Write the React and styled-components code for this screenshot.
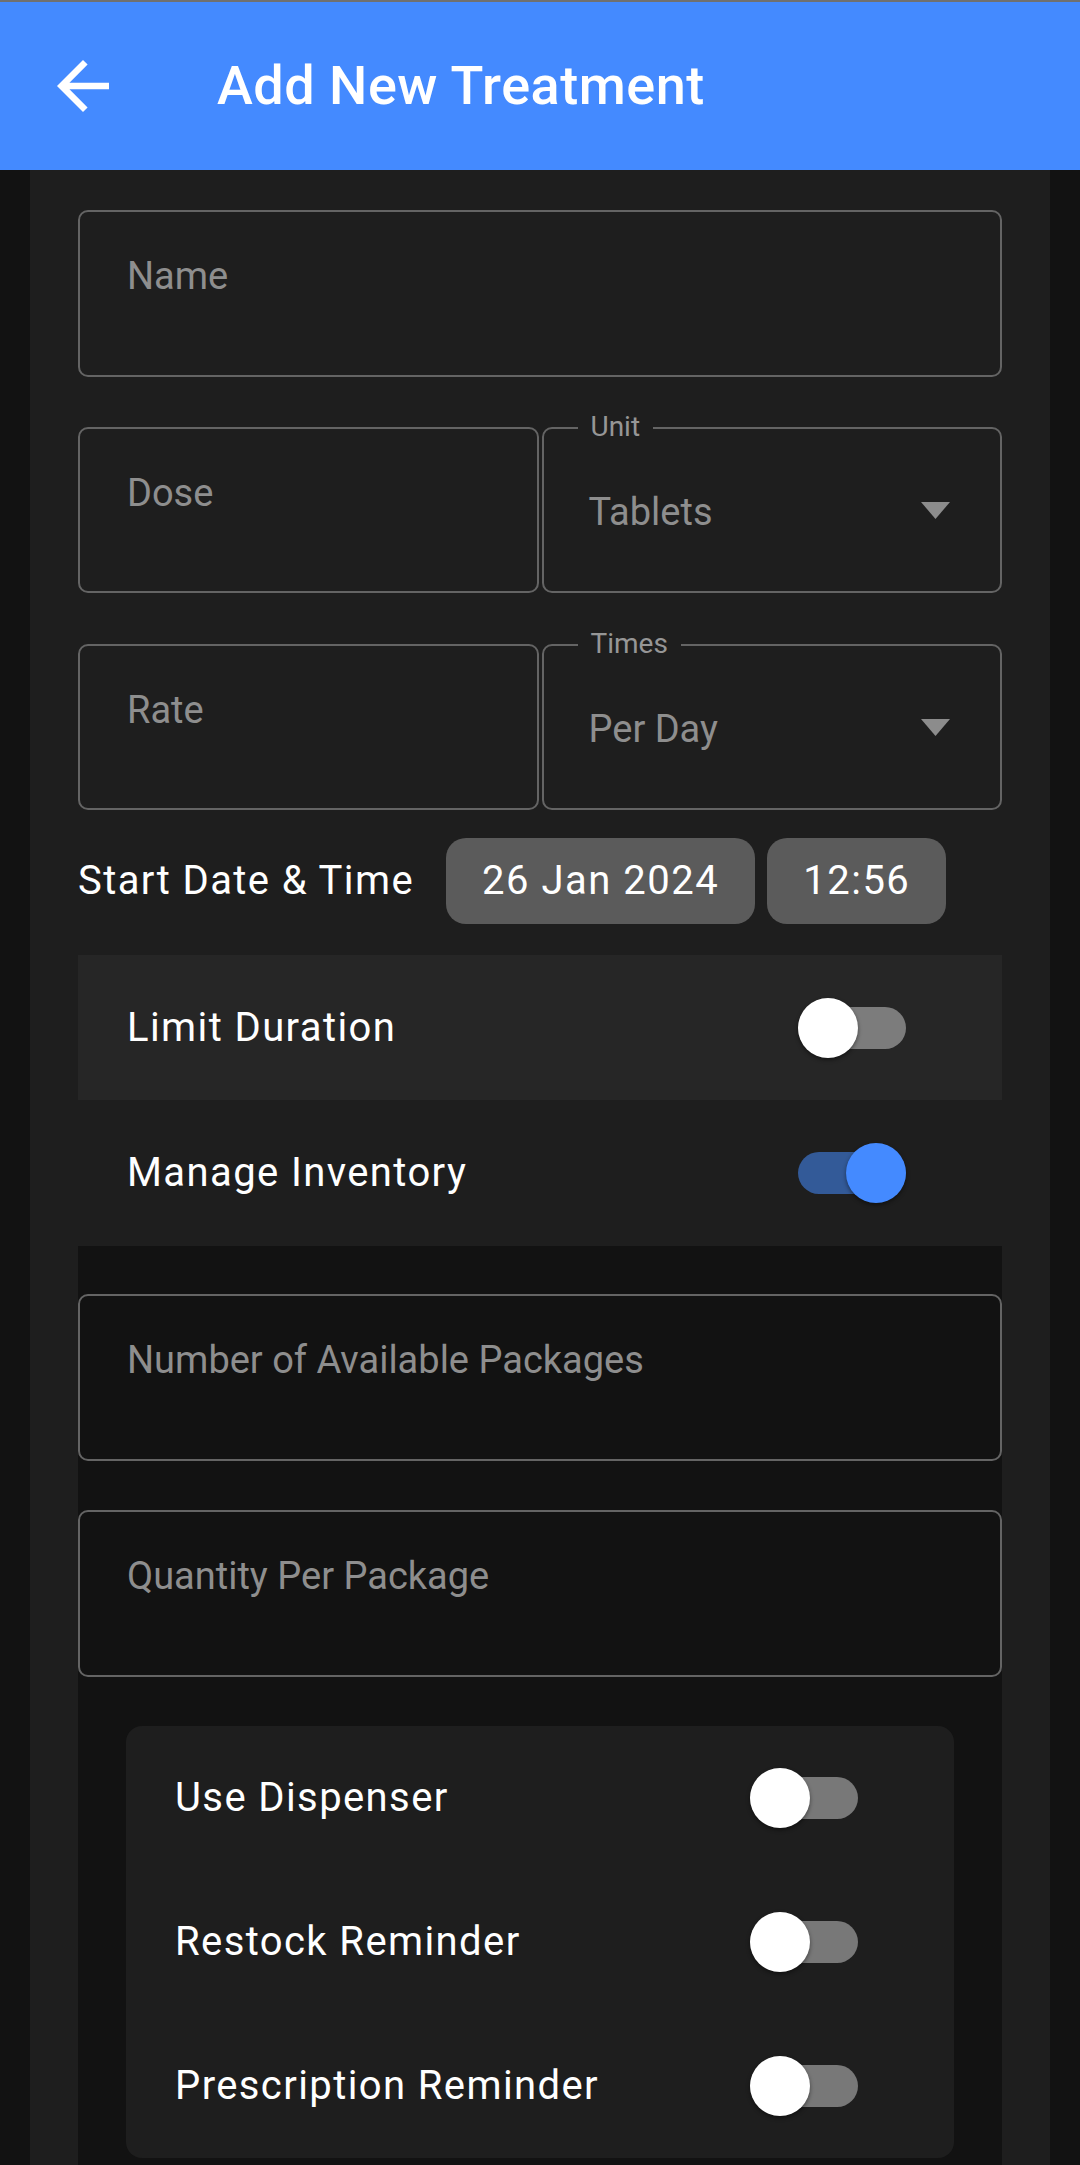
import React from "react";
import styled, { createGlobalStyle } from "styled-components";

const GlobalStyle = createGlobalStyle`
  html, body {
    margin: 0;
    padding: 0;
    background: #121212;
    font-family: Roboto, "Noto Sans", "Liberation Sans", sans-serif;
    -webkit-font-smoothing: antialiased;
  }
  * { box-sizing: border-box; }
`;

const Page = styled.div`
  width: 1080px;
  min-height: 2165px;
  background: #121212;
  display: flex;
  flex-direction: column;
`;

const StatusLine = styled.div`
  height: 2px;
  flex: none;
  background: #707070;
`;

const AppBar = styled.header`
  height: 168px;
  flex: none;
  background: #448aff;
  display: flex;
  align-items: center;
  padding-left: 57px;
  gap: 108px;
`;

const BackButton = styled.button`
  width: 52px;
  height: 52px;
  padding: 0;
  border: none;
  background: transparent;
  display: flex;
  align-items: center;
  justify-content: center;
  svg { display: block; }
`;

const Title = styled.h1`
  margin: 0;
  color: #ffffff;
  font-size: 54px;
  font-weight: 500;
  line-height: 1;
  letter-spacing: 0.5px;
`;

const Card = styled.main`
  margin: 0 30px;
  background: #1e1e1e;
  padding: 40px 48px 0;
  flex: 1;
  display: flex;
  flex-direction: column;
`;

const Field = styled.div`
  position: relative;
  flex: none;
  height: ${(p) => p.$h || 166}px;
  border: 2px solid #646464;
  border-radius: 10px;
  padding: 45px 48px 0 47px;
  margin-top: ${(p) => p.$mt || 0}px;
  display: flex;
  align-items: ${(p) => (p.$select ? "center" : "flex-start")};
  justify-content: space-between;
  ${(p) => (p.$select ? "padding-top: 0; padding-right: 50px; padding-left: 45px;" : "")}
`;

const Placeholder = styled.span`
  font-size: 38px;
  line-height: 1;
  color: #8e8e8e;
  white-space: nowrap;
`;

const FloatLabel = styled.span`
  position: absolute;
  left: 34px;
  top: -16px;
  padding: 0 13px;
  background: #1e1e1e;
  font-size: 28px;
  line-height: 1;
  color: #969696;
`;

const Value = styled.span`
  font-size: 38px;
  line-height: 1;
  color: #8e8e8e;
  margin-top: 4px;
`;

const FieldRow = styled.div`
  display: flex;
  gap: 3px;
  margin-top: ${(p) => p.$mt || 50}px;
  flex: none;
  & > * { flex: 1 1 0; }
`;

const DateRow = styled.div`
  display: flex;
  align-items: center;
  margin-top: 28px;
  height: 86px;
  flex: none;
`;

const RowLabel = styled.span`
  font-size: 40px;
  line-height: 1;
  letter-spacing: 1.4px;
  color: #ffffff;
  white-space: nowrap;
`;

const Chips = styled.div`
  display: flex;
  gap: 12px;
  margin-left: 32px;
`;

const Chip = styled.button`
  height: 86px;
  padding: 0 36px;
  border: none;
  border-radius: 20px;
  background: #5b5b5b;
  color: #ffffff;
  font-family: inherit;
  font-size: 40px;
  letter-spacing: 1.5px;
  line-height: 1;
`;

const ToggleRow = styled.div`
  height: ${(p) => p.$h || 145}px;
  flex: none;
  margin-top: ${(p) => p.$mt || 0}px;
  background: ${(p) => (p.$shaded ? "#262626" : "transparent")};
  display: flex;
  align-items: center;
  justify-content: space-between;
  padding: 0 96px 0 49px;
`;

const Track = styled.div`
  position: relative;
  width: 108px;
  height: 42px;
  border-radius: 21px;
  background: ${(p) => (p.$on ? "#335a98" : "rgba(255,255,255,0.4)")};
  flex-shrink: 0;
`;

const Thumb = styled.div`
  position: absolute;
  top: -9px;
  ${(p) => (p.$on ? "right: 0;" : "left: 0;")}
  width: 60px;
  height: 60px;
  border-radius: 50%;
  background: ${(p) => (p.$on ? "#448aff" : "#ffffff")};
  box-shadow: 0 2px 4px rgba(0, 0, 0, 0.45);
`;

const InventorySection = styled.section`
  background: #121212;
  padding: 48px 0 48px;
  display: flex;
  flex-direction: column;
  flex: 1;
`;

const InnerCard = styled.div`
  margin: 49px 48px 0;
  background: #1e1e1e;
  border-radius: 16px;
  display: flex;
  flex-direction: column;
  flex: none;
`;

const Switch = ({ on }) => (
  <Track $on={on}>
    <Thumb $on={on} />
  </Track>
);

const Caret = () => (
  <svg width="29" height="17" viewBox="0 0 29 17">
    <polygon points="0,0 29,0 14.5,17" fill="#8c8c8c" />
  </svg>
);

const Select = ({ label, value }) => (
  <Field $select>
    <FloatLabel>{label}</FloatLabel>
    <Value>{value}</Value>
    <Caret />
  </Field>
);

export default function App() {
  return (
    <Page>
      <GlobalStyle />
      <StatusLine />
      <AppBar>
        <BackButton aria-label="Back">
          <svg width="52" height="52" viewBox="4 4 16 16">
            <path
              fill="#ffffff"
              d="M20 11H7.83l5.59-5.59L12 4l-8 8 8 8 1.41-1.41L7.83 13H20v-2z"
            />
          </svg>
        </BackButton>
        <Title>Add New Treatment</Title>
      </AppBar>
      <Card>
        <Field $h={167}>
          <Placeholder>Name</Placeholder>
        </Field>
        <FieldRow>
          <Field>
            <Placeholder>Dose</Placeholder>
          </Field>
          <Select label="Unit" value="Tablets" />
        </FieldRow>
        <FieldRow $mt={51}>
          <Field>
            <Placeholder>Rate</Placeholder>
          </Field>
          <Select label="Times" value="Per Day" />
        </FieldRow>
        <DateRow>
          <RowLabel>Start Date &amp; Time</RowLabel>
          <Chips>
            <Chip>26 Jan 2024</Chip>
            <Chip>12:56</Chip>
          </Chips>
        </DateRow>
        <ToggleRow $shaded $mt={31}>
          <RowLabel>Limit Duration</RowLabel>
          <Switch on={false} />
        </ToggleRow>
        <ToggleRow $h={146}>
          <RowLabel>Manage Inventory</RowLabel>
          <Switch on />
        </ToggleRow>
        <InventorySection>
          <Field $h={167}>
            <Placeholder>Number of Available Packages</Placeholder>
          </Field>
          <Field $h={167} $mt={49}>
            <Placeholder>Quantity Per Package</Placeholder>
          </Field>
          <InnerCard>
            <ToggleRow $h={144}>
              <RowLabel>Use Dispenser</RowLabel>
              <Switch on={false} />
            </ToggleRow>
            <ToggleRow $h={144}>
              <RowLabel>Restock Reminder</RowLabel>
              <Switch on={false} />
            </ToggleRow>
            <ToggleRow $h={144}>
              <RowLabel>Prescription Reminder</RowLabel>
              <Switch on={false} />
            </ToggleRow>
          </InnerCard>
        </InventorySection>
      </Card>
    </Page>
  );
}
